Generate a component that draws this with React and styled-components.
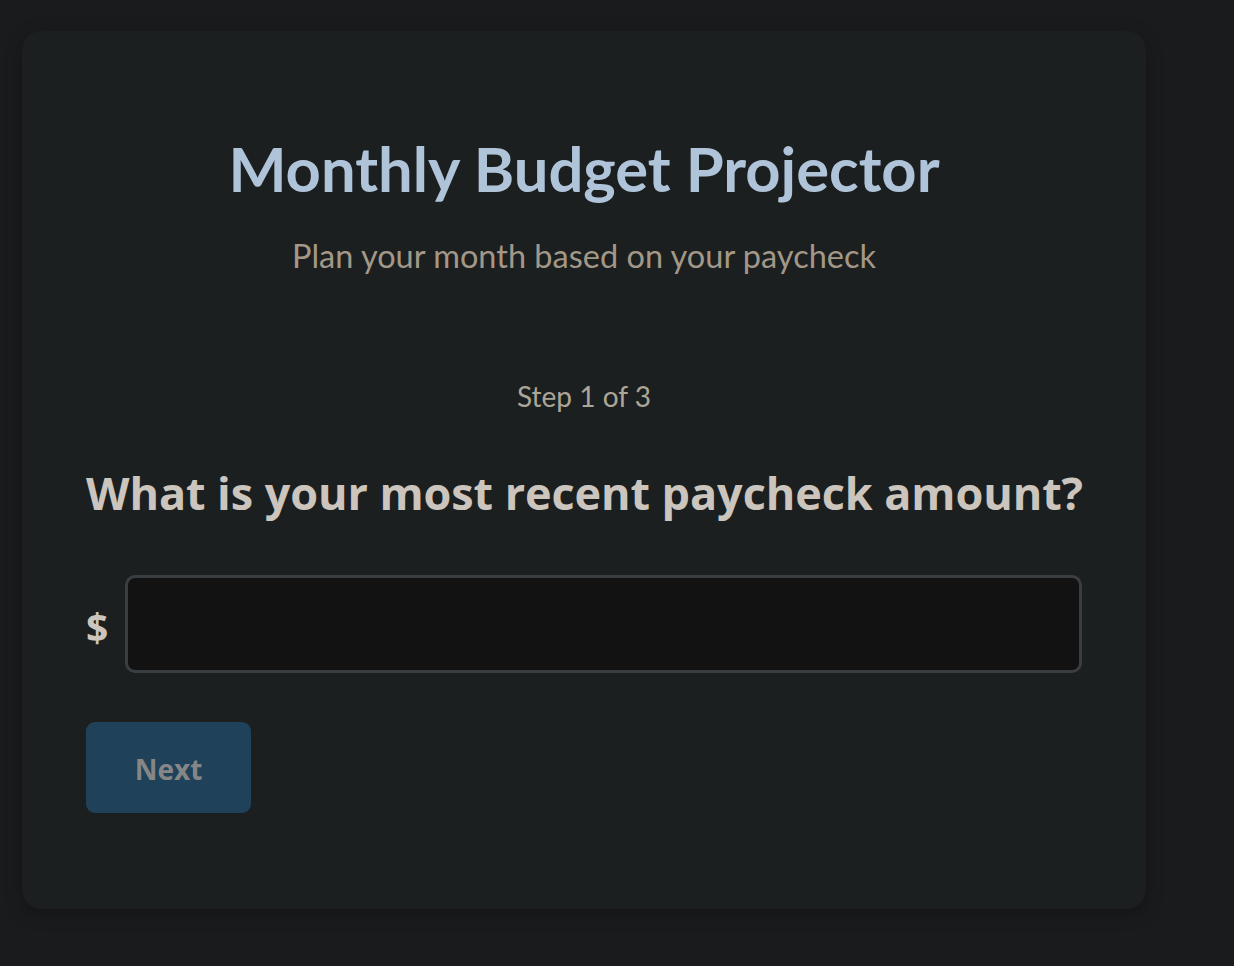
import React from "react";
import styled, { createGlobalStyle } from "styled-components";

const Global = createGlobalStyle`
  html, body { margin: 0; padding: 0; background: #1a1b1d; }
  body { font-family: "Lato", "Open Sans", sans-serif; }
  * { box-sizing: border-box; }
`;

const Page = styled.div`
  min-height: 966px;
  padding: 31px 88px 0 22px;
`;

const Card = styled.div`
  width: 1124px;
  background: #1c1f20;
  border-radius: 20px;
  box-shadow: 0 4px 18px rgba(0, 0, 0, 0.25);
  padding: 99px 64px 96px 64px;
  display: flex;
  flex-direction: column;
`;

const Header = styled.header`
  display: flex;
  flex-direction: column;
  align-items: center;
  text-align: center;
`;

const Title = styled.h1`
  margin: 0;
  font-size: 61.5px;
  line-height: 76px;
  font-weight: 700;
  color: #b0c4d9;
`;

const Subtitle = styled.p`
  margin: 30px 0 0;
  font-size: 32.5px;
  line-height: 40px;
  color: #a39888;
`;

const Step = styled.div`
  margin-top: 102px;
  text-align: center;
  font-size: 28px;
  line-height: 36px;
  color: #aca699;
`;

const Question = styled.h2`
  margin: 49px 0 0;
  font-family: "Open Sans", "Lato", sans-serif;
  font-size: 45px;
  line-height: 60px;
  font-weight: 700;
  letter-spacing: -0.08px;
  white-space: nowrap;
  color: #cbc5be;
`;

const InputRow = styled.div`
  margin-top: 52px;
  display: flex;
  align-items: center;
  gap: 17px;
`;

const Currency = styled.span`
  font-family: "Open Sans", "Lato", sans-serif;
  font-size: 39px;
  line-height: 1;
  padding-top: 4px;
  font-weight: 700;
  color: #cbc5be;
  width: 22px;
`;

const AmountInput = styled.input`
  flex: 1;
  height: 98px;
  background: #121212;
  border: 3px solid #3b3e41;
  border-radius: 10px;
  color: #ddd;
  font-size: 32px;
  padding: 0 20px;
  outline: none;
  font-family: inherit;
`;

const Actions = styled.div`
  margin-top: 49px;
  display: flex;
`;

const NextButton = styled.button`
  width: 165px;
  height: 91px;
  border: none;
  border-radius: 9px;
  background: #1f425a;
  color: #868686;
  font-family: "Open Sans", "Lato", sans-serif;
  font-size: 28px;
  font-weight: 700;
  padding-top: 4px;
  cursor: not-allowed;
`;

export default function App() {
  return (
    <>
      <Global />
      <Page>
        <Card>
          <Header>
            <Title>Monthly Budget Projector</Title>
            <Subtitle>Plan your month based on your paycheck</Subtitle>
          </Header>
          <Step>Step 1 of 3</Step>
          <Question>What is your most recent paycheck amount?</Question>
          <InputRow>
            <Currency>$</Currency>
            <AmountInput type="text" inputMode="decimal" />
          </InputRow>
          <Actions>
            <NextButton disabled>Next</NextButton>
          </Actions>
        </Card>
      </Page>
    </>
  );
}
